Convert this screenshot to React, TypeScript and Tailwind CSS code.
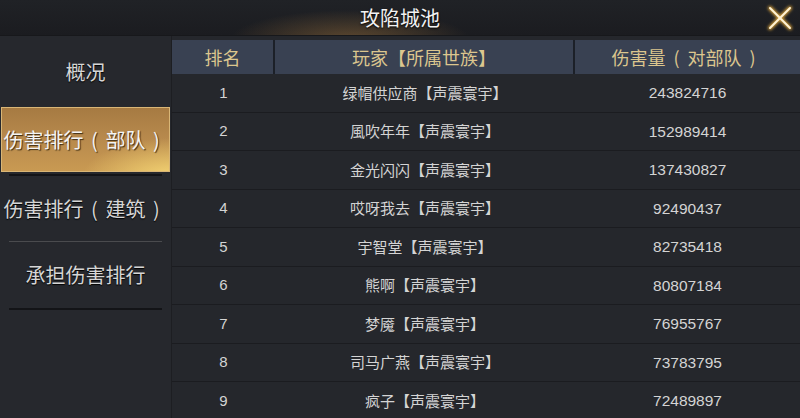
import React from "react";

const rows: [string, string, string][] = [
  ["1", "绿帽供应商【声震寰宇】", "243824716"],
  ["2", "風吹年年【声震寰宇】", "152989414"],
  ["3", "金光闪闪【声震寰宇】", "137430827"],
  ["4", "哎呀我去【声震寰宇】", "92490437"],
  ["5", "宇智堂【声震寰宇】", "82735418"],
  ["6", "熊啊【声震寰宇】", "80807184"],
  ["7", "梦魇【声震寰宇】", "76955767"],
  ["8", "司马广燕【声震寰宇】", "73783795"],
  ["9", "疯子【声震寰宇】", "72489897"],
];

const cjk = { fontFamily: '"Noto Sans CJK SC", "Noto Sans", sans-serif' };
const num = { fontFamily: '"Liberation Sans", Arial, sans-serif' };

function P({ c, w }: { c: string; w: string }) {
  return <span className={`inline-block text-center ${w}`}>{c}</span>;
}

export default function App() {
  return (
    <div
      className="w-[800px] h-[418px] overflow-hidden bg-[#25272c] flex flex-col"
      style={cjk}
    >
      {/* Top bar */}
      <div className="relative h-[36px] shrink-0 flex items-center justify-center bg-[radial-gradient(ellipse_120px_30px_at_350px_40px,rgba(150,110,60,0.55),transparent),linear-gradient(to_bottom,#202226,#1b1c20)] border-b border-[#17181b]">
        <span className="text-[20px] text-[#f2f2f2] leading-none [text-shadow:0_1px_2px_#000]">
          攻陷城池
        </span>
        <svg
          className="absolute right-[5px] top-[3px]"
          width="30"
          height="30"
          viewBox="0 0 30 30"
        >
          <defs>
            <filter id="g" x="-50%" y="-50%" width="200%" height="200%">
              <feGaussianBlur stdDeviation="1.6" />
            </filter>
          </defs>
          <g stroke="#d9a23a" strokeWidth="4" strokeLinecap="round" filter="url(#g)">
            <line x1="5" y1="5" x2="25" y2="25" />
            <line x1="25" y1="5" x2="5" y2="25" />
          </g>
          <g stroke="#fff3d6" strokeWidth="2" strokeLinecap="round">
            <line x1="5" y1="5" x2="25" y2="25" />
            <line x1="25" y1="5" x2="5" y2="25" />
          </g>
        </svg>
      </div>

      <div className="flex flex-1 min-h-0">
        {/* Sidebar */}
        <div className="w-[172px] shrink-0 flex flex-col bg-[#26282d] border-r border-[#1d1e22]">
          <div className="h-[71px] flex items-center justify-center text-[20px] text-[#d6d6d6] [text-shadow:0_1px_1px_#000]">
            概况
          </div>
          <div className="h-[65px] mx-[1px] flex items-center justify-center text-[20px] text-[#f4f4f4] [text-shadow:1px_1px_1px_#3b2a12] border border-[#d9b676] bg-[radial-gradient(ellipse_90px_40px_at_170px_70px,rgba(250,220,120,0.9),transparent),linear-gradient(to_bottom,#a67a42,#b88a4d_50%,#c99a52)]">
            <span className="whitespace-nowrap">
              伤害排行<P c="(" w="w-[22px]" />部队<P c=")" w="w-[22px]" />
            </span>
          </div>
          <div className="h-[2px] mx-[9px] mt-[2px] bg-[#131417]" />
          <div className="h-[65px] flex items-center justify-center text-[20px] text-[#d6d6d6] [text-shadow:0_1px_1px_#000]">
            <span className="whitespace-nowrap">
              伤害排行<P c="(" w="w-[22px]" />建筑<P c=")" w="w-[22px]" />
            </span>
          </div>
          <div className="h-[1px] mx-[9px] bg-[#4a4b4e]" />
          <div className="h-[66px] flex items-center justify-center text-[20px] text-[#d6d6d6] [text-shadow:0_1px_1px_#000]">
            承担伤害排行
          </div>
          <div className="h-[2px] mx-[9px] bg-[#131417]" />
        </div>

        {/* Table */}
        <div className="flex-1 flex flex-col pt-[4px]">
          <div className="h-[34px] shrink-0 flex bg-[#394152] text-[18px] text-[#dcc68e]">
            <div className="w-[103px] flex items-center justify-center border-r-2 border-[#1c2028]">
              排名
            </div>
            <div className="w-[300px] flex items-center justify-center border-r-2 border-[#1c2028]">
              玩家【所属世族】
            </div>
            <div className="flex-1 flex items-center justify-center">
              <span className="whitespace-nowrap">
                伤害量<P c="(" w="w-[22px]" />对部队<P c=")" w="w-[22px]" />
              </span>
            </div>
          </div>
          <div className="flex flex-col">
            {rows.map(([r, n, d]) => (
              <div
                key={r}
                className="h-[38.5px] shrink-0 flex items-center text-[15px] text-[#d4d4d4] border-b border-[#1b1c20]"
              >
                <div className="w-[103px] text-center" style={num}>
                  {r}
                </div>
                <div className="w-[300px] text-center">{n}</div>
                <div className="flex-1 text-center text-[15.5px]" style={num}>
                  {d}
                </div>
              </div>
            ))}
          </div>
        </div>
      </div>
    </div>
  );
}
